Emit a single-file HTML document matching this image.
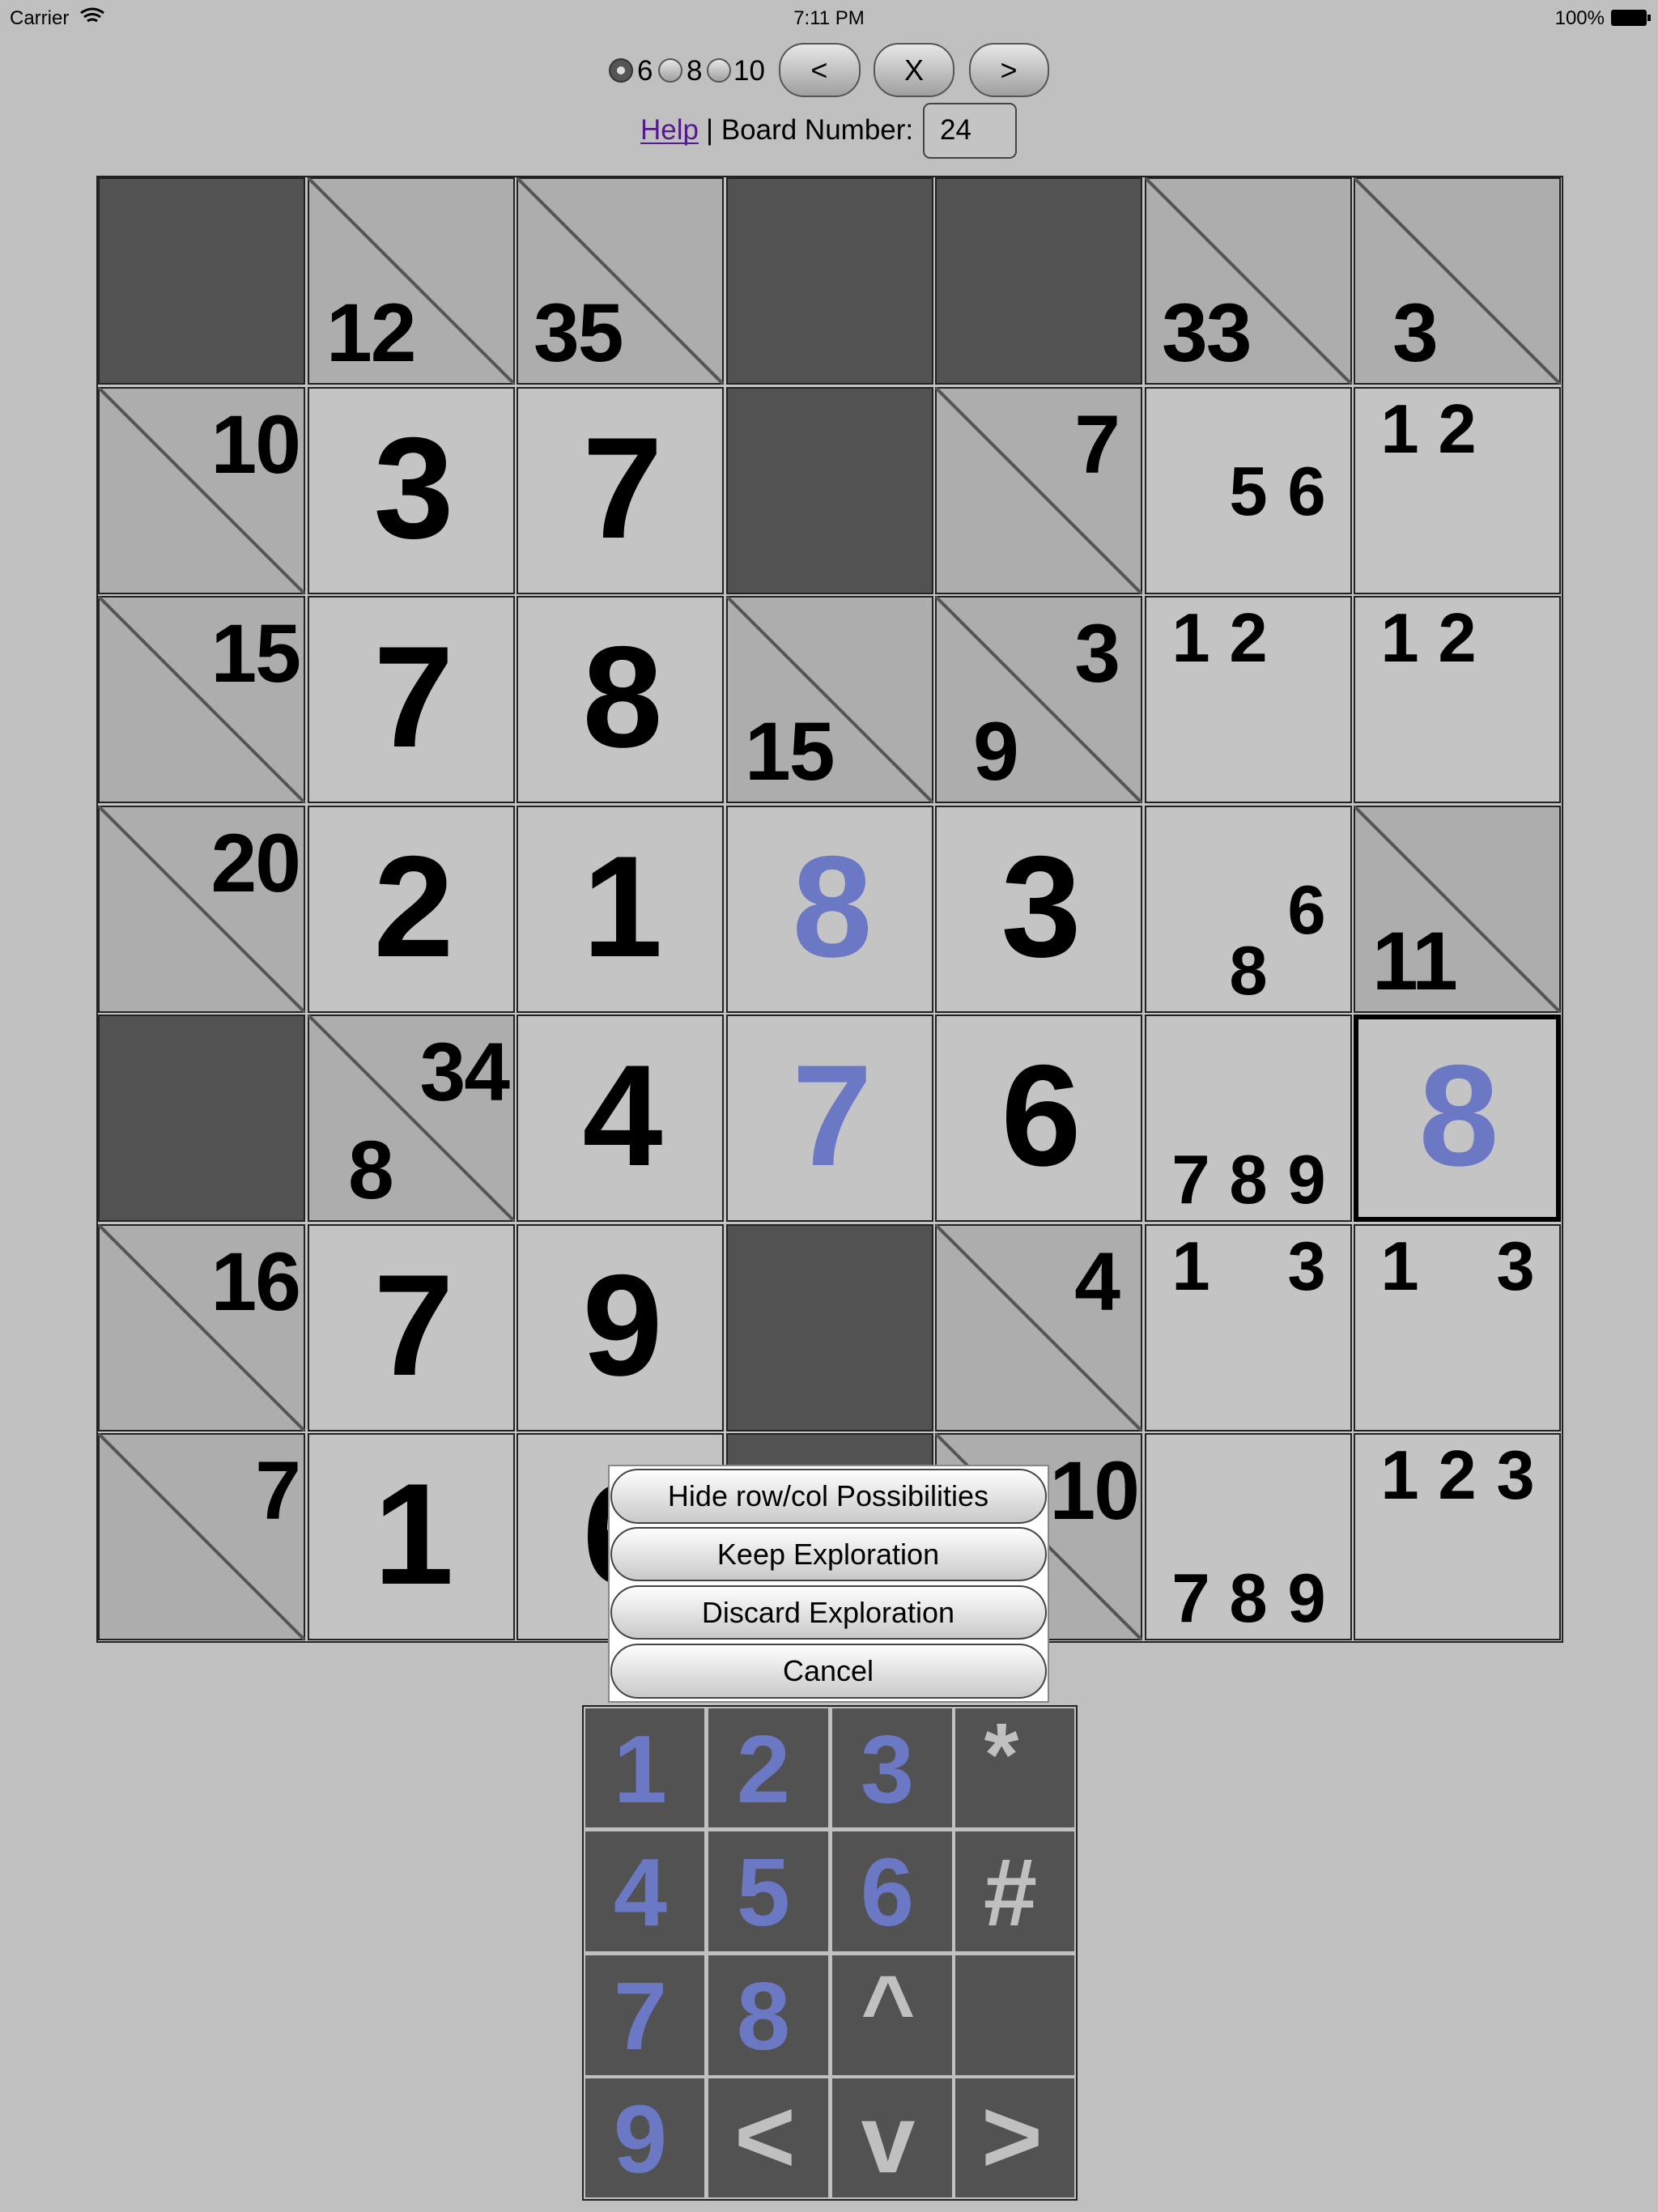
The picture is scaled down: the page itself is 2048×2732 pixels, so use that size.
<!DOCTYPE html>
<html><head><meta charset="utf-8"><style>
html,body{margin:0;padding:0;background:#c0c0c0;width:2048px;height:2732px;overflow:hidden}
svg{display:block}
text{font-family:"Liberation Sans",Arial,sans-serif}
.big{font-size:178px;font-weight:bold;text-anchor:middle}
.cl{font-size:102px;font-weight:bold;letter-spacing:-2px}
.cr{font-size:102px;font-weight:bold;letter-spacing:-2px;text-anchor:end}
.p{font-size:85px;font-weight:bold;text-anchor:middle}
.k{font-size:119px;font-weight:bold;text-anchor:middle;fill:#6b78c4}
.s{font-weight:bold;text-anchor:middle;fill:#c0c0c0}
.m{font-size:36px;text-anchor:middle}
</style></head><body>
<svg width="2048" height="2732" viewBox="0 0 2048 2732" xmlns="http://www.w3.org/2000/svg">
<defs>
<linearGradient id="g" x1="0" y1="0" x2="0" y2="1"><stop offset="0" stop-color="#e8e8e8"/><stop offset="1" stop-color="#9e9e9e"/></linearGradient>
<linearGradient id="g2" x1="0" y1="0" x2="0" y2="1"><stop offset="0" stop-color="#ffffff"/><stop offset="1" stop-color="#c8c8c8"/></linearGradient>
</defs>
<rect width="2048" height="2732" fill="#c0c0c0"/>
<text x="12" y="30" font-size="24">Carrier</text>
<path d="M100 16 q14 -10 28 0 M104 21 q10 -7 20 0 M108 26 q6 -4 12 0" stroke="#000" stroke-width="3" fill="none"/>
<text x="1024" y="30" font-size="24" text-anchor="middle">7:11 PM</text>
<text x="1982" y="30" font-size="24" text-anchor="end">100%</text>
<rect x="1990" y="12" width="44" height="20" rx="3" fill="#000"/><rect x="2035" y="18" width="4" height="8" fill="#000"/>
<circle cx="767" cy="87" r="14" fill="#555" stroke="#333" stroke-width="2"/><circle cx="767" cy="87" r="5" fill="#ddd"/>
<text x="787" y="99" font-size="35">6</text>
<circle cx="828" cy="87" r="14" fill="url(#g)" stroke="#555" stroke-width="2"/>
<text x="848" y="99" font-size="35">8</text>
<circle cx="888" cy="87" r="14" fill="url(#g)" stroke="#555" stroke-width="2"/>
<text x="906" y="99" font-size="35">10</text>
<rect x="963" y="54" width="99" height="65" rx="30" fill="url(#g)" stroke="#555" stroke-width="2"/>
<text x="1012" y="99" font-size="36" text-anchor="middle">&lt;</text>
<rect x="1080" y="54" width="98" height="65" rx="30" fill="url(#g)" stroke="#555" stroke-width="2"/>
<text x="1129" y="99" font-size="36" text-anchor="middle">X</text>
<rect x="1198" y="54" width="97" height="65" rx="30" fill="url(#g)" stroke="#555" stroke-width="2"/>
<text x="1246" y="99" font-size="36" text-anchor="middle">&gt;</text>
<text x="791" y="172" font-size="35" fill="#551a8b">Help</text>
<rect x="791" y="176" width="72" height="2" fill="#551a8b"/>
<text x="872" y="172" font-size="35">| Board Number:</text>
<rect x="1141" y="128" width="114" height="67" rx="8" fill="#c4c4c4" stroke="#444" stroke-width="2"/>
<text x="1161" y="172" font-size="35">24</text>

<rect x="120" y="218" width="1810" height="1810" fill="#c4c4c4" stroke="#222" stroke-width="2"/>
<g stroke="#222" stroke-width="2">
<rect x="122" y="220" width="254" height="254" fill="#525252"/>
<rect x="381" y="220" width="254" height="254" fill="#adadad"/>
<rect x="639" y="220" width="254" height="254" fill="#adadad"/>
<rect x="898" y="220" width="254" height="254" fill="#525252"/>
<rect x="1156" y="220" width="254" height="254" fill="#525252"/>
<rect x="1415" y="220" width="254" height="254" fill="#adadad"/>
<rect x="1673" y="220" width="254" height="254" fill="#adadad"/>
<rect x="122" y="479" width="254" height="254" fill="#adadad"/>
<rect x="381" y="479" width="254" height="254" fill="#c4c4c4"/>
<rect x="639" y="479" width="254" height="254" fill="#c4c4c4"/>
<rect x="898" y="479" width="254" height="254" fill="#525252"/>
<rect x="1156" y="479" width="254" height="254" fill="#adadad"/>
<rect x="1415" y="479" width="254" height="254" fill="#c4c4c4"/>
<rect x="1673" y="479" width="254" height="254" fill="#c4c4c4"/>
<rect x="122" y="737" width="254" height="254" fill="#adadad"/>
<rect x="381" y="737" width="254" height="254" fill="#c4c4c4"/>
<rect x="639" y="737" width="254" height="254" fill="#c4c4c4"/>
<rect x="898" y="737" width="254" height="254" fill="#adadad"/>
<rect x="1156" y="737" width="254" height="254" fill="#adadad"/>
<rect x="1415" y="737" width="254" height="254" fill="#c4c4c4"/>
<rect x="1673" y="737" width="254" height="254" fill="#c4c4c4"/>
<rect x="122" y="996" width="254" height="254" fill="#adadad"/>
<rect x="381" y="996" width="254" height="254" fill="#c4c4c4"/>
<rect x="639" y="996" width="254" height="254" fill="#c4c4c4"/>
<rect x="898" y="996" width="254" height="254" fill="#c4c4c4"/>
<rect x="1156" y="996" width="254" height="254" fill="#c4c4c4"/>
<rect x="1415" y="996" width="254" height="254" fill="#c4c4c4"/>
<rect x="1673" y="996" width="254" height="254" fill="#adadad"/>
<rect x="122" y="1254" width="254" height="254" fill="#525252"/>
<rect x="381" y="1254" width="254" height="254" fill="#adadad"/>
<rect x="639" y="1254" width="254" height="254" fill="#c4c4c4"/>
<rect x="898" y="1254" width="254" height="254" fill="#c4c4c4"/>
<rect x="1156" y="1254" width="254" height="254" fill="#c4c4c4"/>
<rect x="1415" y="1254" width="254" height="254" fill="#c4c4c4"/>
<rect x="1675" y="1256" width="250" height="250" fill="#c4c4c4" stroke="#000" stroke-width="6"/>
<rect x="122" y="1513" width="254" height="254" fill="#adadad"/>
<rect x="381" y="1513" width="254" height="254" fill="#c4c4c4"/>
<rect x="639" y="1513" width="254" height="254" fill="#c4c4c4"/>
<rect x="898" y="1513" width="254" height="254" fill="#525252"/>
<rect x="1156" y="1513" width="254" height="254" fill="#adadad"/>
<rect x="1415" y="1513" width="254" height="254" fill="#c4c4c4"/>
<rect x="1673" y="1513" width="254" height="254" fill="#c4c4c4"/>
<rect x="122" y="1771" width="254" height="254" fill="#adadad"/>
<rect x="381" y="1771" width="254" height="254" fill="#c4c4c4"/>
<rect x="639" y="1771" width="254" height="254" fill="#c4c4c4"/>
<rect x="898" y="1771" width="254" height="254" fill="#525252"/>
<rect x="1156" y="1771" width="254" height="254" fill="#adadad"/>
<rect x="1415" y="1771" width="254" height="254" fill="#c4c4c4"/>
<rect x="1673" y="1771" width="254" height="254" fill="#c4c4c4"/>
</g>
<g stroke="#555" stroke-width="4">
<line x1="381" y1="220" x2="635" y2="474"/>
<line x1="639" y1="220" x2="893" y2="474"/>
<line x1="1415" y1="220" x2="1669" y2="474"/>
<line x1="1673" y1="220" x2="1927" y2="474"/>
<line x1="122" y1="479" x2="376" y2="733"/>
<line x1="1156" y1="479" x2="1410" y2="733"/>
<line x1="122" y1="737" x2="376" y2="991"/>
<line x1="898" y1="737" x2="1152" y2="991"/>
<line x1="1156" y1="737" x2="1410" y2="991"/>
<line x1="122" y1="996" x2="376" y2="1250"/>
<line x1="1673" y1="996" x2="1927" y2="1250"/>
<line x1="381" y1="1254" x2="635" y2="1508"/>
<line x1="122" y1="1513" x2="376" y2="1767"/>
<line x1="1156" y1="1513" x2="1410" y2="1767"/>
<line x1="122" y1="1771" x2="376" y2="2025"/>
<line x1="1156" y1="1771" x2="1410" y2="2025"/>
</g>
<text class="cl" x="403" y="446">12</text>
<text class="cl" x="659" y="446">35</text>
<text class="cl" x="1435" y="446">33</text>
<text class="cl" x="1720" y="446">3</text>
<text class="cr" x="370" y="584">10</text>
<text class="cr" x="1382" y="584">7</text>
<text class="cr" x="370" y="842">15</text>
<text class="cl" x="920" y="963">15</text>
<text class="cr" x="1382" y="842">3</text>
<text class="cl" x="1202" y="963">9</text>
<text class="cr" x="370" y="1101">20</text>
<text class="cl" x="1695" y="1222">11</text>
<text class="cr" x="628" y="1359">34</text>
<text class="cl" x="430" y="1480">8</text>
<text class="cr" x="370" y="1618">16</text>
<text class="cr" x="1382" y="1618">4</text>
<text class="cr" x="370" y="1876">7</text>
<text class="cr" x="1406" y="1876">10</text>
<text class="big" x="511" y="664">3</text>
<text class="big" x="769" y="664">7</text>
<text class="big" x="511" y="922">7</text>
<text class="big" x="769" y="922">8</text>
<text class="big" x="511" y="1181">2</text>
<text class="big" x="769" y="1181">1</text>
<text class="big" x="1028" y="1181" fill="#6b78c4">8</text>
<text class="big" x="1286" y="1181">3</text>
<text class="big" x="769" y="1439">4</text>
<text class="big" x="1028" y="1439" fill="#6b78c4">7</text>
<text class="big" x="1286" y="1439">6</text>
<text class="big" x="1802" y="1439" fill="#6b78c4">8</text>
<text class="big" x="511" y="1698">7</text>
<text class="big" x="769" y="1698">9</text>
<text class="big" x="511" y="1956">1</text>
<text class="big" x="769" y="1956">6</text>
<text class="p" x="1542" y="636">5</text><text class="p" x="1614" y="636">6</text>
<text class="p" x="1729" y="559">1</text><text class="p" x="1800" y="559">2</text>
<text class="p" x="1471" y="817">1</text><text class="p" x="1542" y="817">2</text>
<text class="p" x="1729" y="817">1</text><text class="p" x="1800" y="817">2</text>
<text class="p" x="1614" y="1153">6</text>
<text class="p" x="1542" y="1228">8</text>
<text class="p" x="1471" y="1486">7</text><text class="p" x="1542" y="1486">8</text><text class="p" x="1614" y="1486">9</text>
<text class="p" x="1471" y="1593">1</text><text class="p" x="1614" y="1593">3</text>
<text class="p" x="1729" y="1593">1</text><text class="p" x="1872" y="1593">3</text>
<text class="p" x="1471" y="2003">7</text><text class="p" x="1542" y="2003">8</text><text class="p" x="1614" y="2003">9</text>
<text class="p" x="1729" y="1851">1</text><text class="p" x="1800" y="1851">2</text><text class="p" x="1872" y="1851">3</text>

<rect x="752" y="1810" width="543" height="292" fill="#fff" stroke="#888" stroke-width="2"/>
<rect x="755" y="1815" width="537" height="66" rx="33" fill="url(#g2)" stroke="#444" stroke-width="2"/>
<text class="m" x="1023" y="1860">Hide row/col Possibilities</text>
<rect x="755" y="1887" width="537" height="65" rx="33" fill="url(#g2)" stroke="#444" stroke-width="2"/>
<text class="m" x="1023" y="1932">Keep Exploration</text>
<rect x="755" y="1959" width="537" height="65" rx="33" fill="url(#g2)" stroke="#444" stroke-width="2"/>
<text class="m" x="1023" y="2004">Discard Exploration</text>
<rect x="755" y="2031" width="537" height="66" rx="33" fill="url(#g2)" stroke="#444" stroke-width="2"/>
<text class="m" x="1023" y="2076">Cancel</text>

<rect x="720" y="2107" width="610" height="610" fill="#c0c0c0" stroke="#222" stroke-width="2"/>
<g fill="#525252">
<rect x="723" y="2110" width="147" height="147"/><rect x="875" y="2110" width="148" height="147"/><rect x="1028" y="2110" width="148" height="147"/><rect x="1180" y="2110" width="147" height="147"/>
<rect x="723" y="2262" width="147" height="148"/><rect x="875" y="2262" width="148" height="148"/><rect x="1028" y="2262" width="148" height="148"/><rect x="1180" y="2262" width="147" height="148"/>
<rect x="723" y="2415" width="147" height="148"/><rect x="875" y="2415" width="148" height="148"/><rect x="1028" y="2415" width="148" height="148"/><rect x="1180" y="2415" width="147" height="148"/>
<rect x="723" y="2567" width="147" height="147"/><rect x="875" y="2567" width="148" height="147"/><rect x="1028" y="2567" width="148" height="147"/><rect x="1180" y="2567" width="147" height="147"/>
</g>
<text class="k" x="791" y="2226">1</text><text class="k" x="943" y="2226">2</text><text class="k" x="1096" y="2226">3</text>
<text class="s" x="1237" y="2205" font-size="110">*</text>
<text class="k" x="791" y="2378">4</text><text class="k" x="943" y="2378">5</text><text class="k" x="1096" y="2378">6</text>
<text class="s" x="1248" y="2378" font-size="119">#</text>
<text class="k" x="791" y="2531">7</text><text class="k" x="943" y="2531">8</text>
<text class="s" x="1097" y="2520" font-size="115">^</text>
<text class="k" x="791" y="2683">9</text>
<text class="s" x="945" y="2683" font-size="130">&lt;</text>
<text class="s" x="1097" y="2683" font-size="120">v</text>
<text class="s" x="1250" y="2683" font-size="130">&gt;</text>
</svg>
</body></html>
